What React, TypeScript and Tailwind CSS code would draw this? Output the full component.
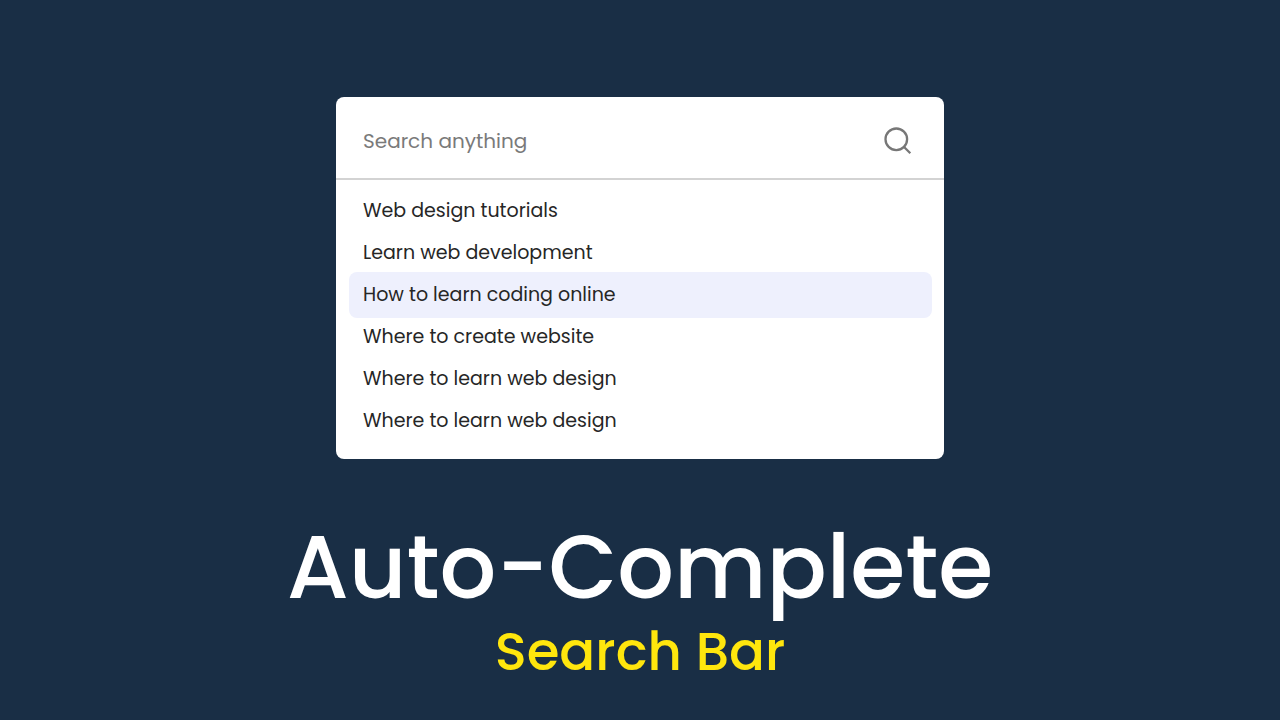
import React, { useState } from "react";

const suggestions: string[] = [
  "Web design tutorials",
  "Learn web development",
  "How to learn coding online",
  "Where to create website",
  "Where to learn web design",
  "Where to learn web design",
];

function SearchIcon() {
  return (
    <svg viewBox="0 0 28 28" className="size-7" fill="none" stroke="#777777" strokeWidth="2.3" aria-hidden="true">
      <circle cx="12.3" cy="12.3" r="10.8" />
      <path d="M19.8 19.8L26.3 26.3" />
    </svg>
  );
}

function SearchBox() {
  const [query, setQuery] = useState("");
  const [active, setActive] = useState(2);

  return (
    <section className="w-full max-w-[608px] rounded-lg bg-white">
      <form role="search" onSubmit={(e) => e.preventDefault()} className="flex items-center border-b-2 border-[#d3d3d3] pt-7 pr-8 pb-[21px] pl-[27px]">
        <input
          type="text"
          aria-label="Search"
          placeholder="Search anything"
          value={query}
          onChange={(e) => setQuery(e.target.value)}
          className="min-w-0 flex-1 text-[20px] leading-8 text-[#222] outline-none placeholder:text-[#7a7a7a]"
        />
        <button type="submit" aria-label="Submit search">
          <SearchIcon />
        </button>
      </form>
      <ul className="pt-2.5 pr-3 pb-[17px] pl-[13px]">
        {suggestions.map((text, i) => (
          <li key={i}>
            <button
              type="button"
              onClick={() => setActive(i)}
              className={
                i === active
                  ? "-my-0.5 block w-full rounded-lg bg-[#eef0fd] px-3.5 py-2 text-left text-[19px] leading-[30px] text-[#262626]"
                  : "block w-full px-3.5 py-1.5 text-left text-[19px] leading-[30px] text-[#262626]"
              }
            >
              {text}
            </button>
          </li>
        ))}
      </ul>
    </section>
  );
}

export default function App() {
  return (
    <main className="flex min-h-screen flex-col items-center bg-[#192e45] px-4 pt-[97px] font-[Poppins,Lato,sans-serif]">
      <SearchBox />
      <h1 className="flex flex-col items-center pt-[58px] text-center font-medium">
        <span className="text-[89px] leading-[100px] text-white">Auto-Complete</span>
        <span className="text-[53px] leading-[70px] text-[#ffe60d]">Search Bar</span>
      </h1>
    </main>
  );
}
